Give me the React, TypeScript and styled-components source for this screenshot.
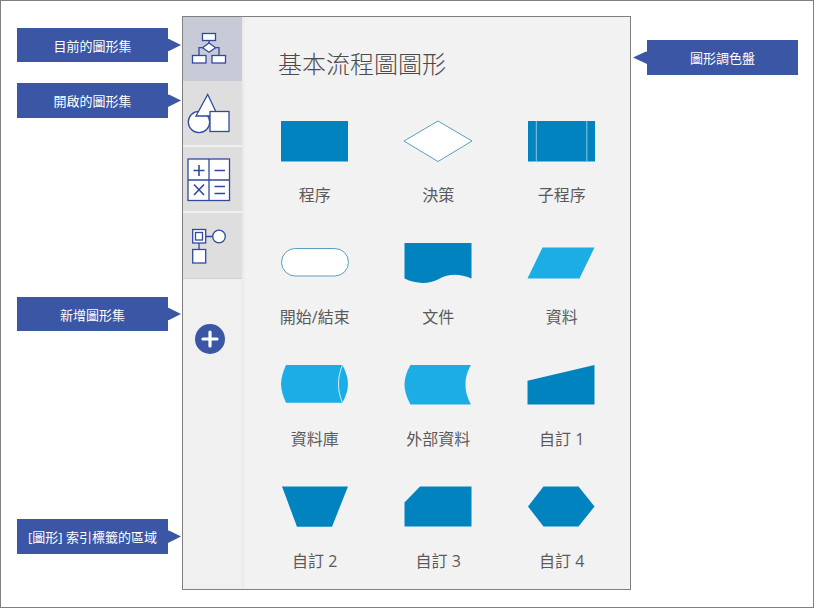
import React from "react";
import styled, { createGlobalStyle } from "styled-components";

const Global = createGlobalStyle`
  html, body { margin: 0; padding: 0; background: #fff; }
  body { font-family: "Open Sans", "Noto Sans CJK TC", sans-serif; }
`;

const Frame = styled.div`
  box-sizing: border-box;
  width: 814px;
  height: 608px;
  border: 1px solid #808080;
  background: #fff;
  display: flex;
  align-items: flex-start;
  overflow: hidden;
`;

const LeftColumn = styled.div`
  box-sizing: border-box;
  width: 181px;
  padding-left: 16px;
  display: flex;
  flex-direction: column;
`;

const RightColumn = styled.div`
  box-sizing: border-box;
  padding-left: 16px;
`;

const Callout = styled.div<{ $top: number; $height: number; $flip?: boolean }>`
  position: relative;
  width: 151px;
  height: ${(p) => p.$height}px;
  margin-top: ${(p) => p.$top}px;
  background: #3a56a5;
  color: #fff;
  font-size: 13px;
  display: flex;
  align-items: center;
  justify-content: center;
  white-space: nowrap;
  &::after {
    content: "";
    position: absolute;
    top: 50%;
    width: ${(p) => (p.$flip ? 14 : 13)}px;
    height: 13px;
    transform: translateY(-50%);
    background: #3a56a5;
    ${(p) =>
      p.$flip
        ? "right: 100%; clip-path: polygon(100% 0, 100% 100%, 0 50%);"
        : "left: 100%; clip-path: polygon(0 0, 0 100%, 100% 50%);"}
  }
`;

const Panel = styled.div`
  box-sizing: border-box;
  width: 449px;
  height: 574px;
  margin-top: 15px;
  border: 1px solid #808080;
  background: #f2f2f2;
  display: flex;
  flex-shrink: 0;
  overflow: hidden;
`;

const Rail = styled.nav`
  width: 59px;
  flex-shrink: 0;
  background: #f0f0f0;
  display: flex;
  flex-direction: column;
`;

const Tab = styled.div<{ $active?: boolean; $gap?: number; $height?: number; $last?: boolean }>`
  height: ${(p) => p.$height ?? 64}px;
  margin-top: ${(p) => p.$gap ?? 0}px;
  background: ${(p) => (p.$active ? "#c8cad8" : "#dedede")};
  flex-shrink: 0;
  ${(p) => (p.$last ? "box-shadow: 0 1px 0 #d2d2d2;" : "")}
  overflow: hidden;
  svg { display: block; }
`;

const AddButton = styled.div`
  margin: 46px 0 0 12px;
  width: 30px;
  height: 30px;
  svg { display: block; }
`;

const Main = styled.main`
  flex: 1;
  padding: 27px 0 0 11px;
  background: linear-gradient(90deg, #e9e9e9 0, #f2f2f2 4px);
`;

const Title = styled.h1`
  margin: 0 0 36px 25px;
  height: 40px;
  line-height: 40px;
  font-size: 24px;
  font-weight: 300;
  color: #4a4a4a;
`;

const Grid = styled.div`
  display: grid;
  grid-template-columns: repeat(3, 123.5px);
  row-gap: 35px;
`;

const Cell = styled.div`
  display: flex;
  flex-direction: column;
  align-items: center;
  height: 87px;
  svg { display: block; }
`;

const Label = styled.div`
  margin-top: 19px;
  height: 24px;
  line-height: 24px;
  font-size: 16px;
  color: #5a5a5a;
  white-space: nowrap;
`;

const DARK = "#0083be";
const LIGHT = "#1cade4";
const EDGE = "#5a9fc0";
const INK = "#2f4a9e";

const Shape = ({ children }: { children: React.ReactNode }) => (
  <svg width="70" height="44" viewBox="0 0 70 44">
    {children}
  </svg>
);

const shapes: { label: string; art: React.ReactNode }[] = [
  { label: "程序", art: <rect x="1" y="1" width="67" height="40.5" fill={DARK} /> },
  { label: "決策", art: <polygon points="35,1 69,21 35,41.5 1,21" fill="#fff" stroke={EDGE} strokeWidth="1" /> },
  {
    label: "子程序",
    art: (
      <>
        <rect x="1" y="1" width="67" height="40.5" fill={DARK} />
        <path d="M9.3 1V41.5M59.8 1V41.5" stroke="#8fc6e0" strokeWidth="1" />
      </>
    ),
  },
  { label: "開始/結束", art: <rect x="1.5" y="6.5" width="67" height="27.5" rx="13.7" fill="#fff" stroke={EDGE} strokeWidth="1" /> },
  { label: "文件", art: <path d="M1.5 1H68.5V36.5C56 31.5 46 31.5 36 37C25 42.5 13 42 1.5 36.5Z" fill={DARK} /> },
  { label: "資料", art: <polygon points="15.5,5.5 67.5,5.5 52.5,36.5 0.5,36.5" fill={LIGHT} /> },
  {
    label: "資料庫",
    art: (
      <>
        <path d="M6 1H62.5C66 8 68 14 68 20C68 26 66 32 62.5 38.7H6C3 32 1 26 1 20C1 14 3 8 6 1Z" fill={LIGHT} />
        <path d="M62.5 1C59.5 8 58.5 14 58.5 20C58.5 26 59.5 32 62.5 38.7" fill="none" stroke="#d5eef9" strokeWidth="1" />
      </>
    ),
  },
  { label: "外部資料", art: <path d="M7.5 1H68C64 8 62.5 14 62.5 20.5C62.5 27 64 33 68 40.5H7.5C3.5 33 1.5 27 1.5 20.5C1.5 14 3.5 8 7.5 1Z" fill={LIGHT} /> },
  { label: "自訂 1", art: <polygon points="0.5,16.7 67.5,1 67.5,40.5 0.5,40.5" fill={DARK} /> },
  { label: "自訂 2", art: <polygon points="2,0.5 68,0.5 52,40.7 17,40.7" fill={DARK} /> },
  { label: "自訂 3", art: <polygon points="1.5,16.5 17,0.5 68.5,0.5 68.5,40.5 1.5,40.5" fill={DARK} /> },
  { label: "自訂 4", art: <polygon points="1,20.5 16.5,0.5 51.5,0.5 67.5,20.5 51.5,40.5 16.5,40.5" fill={DARK} /> },
];

const TabIcon = ({ children }: { children: React.ReactNode }) => (
  <svg width="59" height="66" viewBox="0 0 59 66">
    <g fill="#fff" stroke={INK} strokeWidth="1.3">{children}</g>
  </svg>
);

export default function App() {
  return (
    <>
      <Global />
      <Frame>
        <LeftColumn>
          <Callout $top={27} $height={34}>目前的圖形集</Callout>
          <Callout $top={21} $height={35}>開啟的圖形集</Callout>
          <Callout $top={179} $height={34}>新增圖形集</Callout>
          <Callout $top={188} $height={35}>[圖形] 索引標籤的區域</Callout>
        </LeftColumn>
        <Panel>
          <Rail>
            <Tab $active>
              <TabIcon>
                <path d="M26 23V26M16 38V30.7H36V38" fill="none" />
                <rect x="19.5" y="16.5" width="13" height="7" />
                <polygon points="26,26 32.5,30.7 26,35.2 19.5,30.7" />
                <rect x="9.5" y="38.5" width="13.5" height="7.5" />
                <rect x="29" y="38.5" width="13.5" height="7.5" />
              </TabIcon>
            </Tab>
            <Tab>
              <TabIcon>
                <circle cx="16" cy="41" r="10.7" />
                <polygon points="24.7,13.5 35,35 13,35" />
                <rect x="27" y="30.5" width="19" height="20" />
              </TabIcon>
            </Tab>
            <Tab $gap={2}>
              <TabIcon>
                <rect x="5" y="12" width="41.5" height="41.5" />
                <path d="M26 12V53.5M5 33H46.5" fill="none" />
                <path d="M10.5 23.5H21.5M16 18V29M31.5 23.5H42M11 37.5L21 48M21 37.5L11 48M31.5 39.5H42M31.5 46.5H42" fill="none" strokeWidth="1.6" />
              </TabIcon>
            </Tab>
            <Tab $gap={2} $height={65} $last>
              <TabIcon>
                <path d="M16 30V36.5M23 23.5H30" fill="none" />
                <rect x="9.7" y="16.5" width="13" height="13.5" />
                <rect x="12.5" y="19.5" width="7" height="7.5" />
                <circle cx="36" cy="23.5" r="6.3" />
                <rect x="9.7" y="36.5" width="13" height="13.5" />
              </TabIcon>
            </Tab>
            <AddButton>
              <svg width="30" height="30" viewBox="0 0 30 30">
                <circle cx="15" cy="15" r="15" fill="#3a56a5" />
                <path d="M15 8V22M8 15H22" stroke="#fff" strokeWidth="3.2" strokeLinecap="round" />
              </svg>
            </AddButton>
          </Rail>
          <Main>
            <Title>基本流程圖圖形</Title>
            <Grid>
              {shapes.map((s) => (
                <Cell key={s.label}>
                  <Shape>{s.art}</Shape>
                  <Label>{s.label}</Label>
                </Cell>
              ))}
            </Grid>
          </Main>
        </Panel>
        <RightColumn>
          <Callout $top={39} $height={35} $flip>圖形調色盤</Callout>
        </RightColumn>
      </Frame>
    </>
  );
}
